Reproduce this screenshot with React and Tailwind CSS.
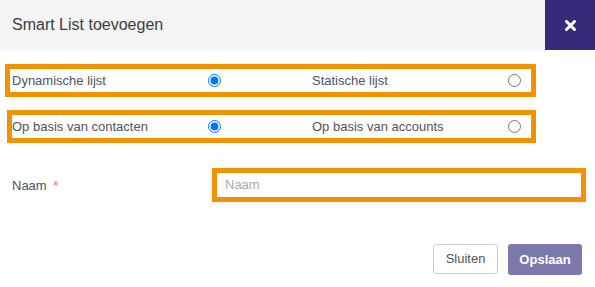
import React from "react";

const Radio = ({ checked }) => (
  <input
    type="radio"
    checked={checked}
    readOnly
    className="w-[13px] h-[13px] m-0 shrink-0"
  />
);

const ChoiceRow = ({ left, right, className }) => (
  <div
    className={`h-[33px] border-[5px] border-[#f39200] flex items-center ${className}`}
  >
    <div className="w-[209px] flex items-center justify-between">
      <span>{left}</span>
      <Radio checked />
    </div>
    <div className="ml-[89px] flex-1 flex items-center justify-between pl-[2px] pr-[10px]">
      <span>{right}</span>
      <Radio checked={false} />
    </div>
  </div>
);

export default function App() {
  return (
    <div
      className="w-[595px] h-[287px] bg-white text-[13px] text-[#4d5360] overflow-hidden"
      style={{ fontFamily: '"Liberation Sans", Arial, sans-serif' }}
    >
      <div className="h-[50px] flex bg-[#f4f4f4]">
        <div className="flex-1 flex items-center pl-[12px] text-[16px] text-[#3d3d3d]">
          Smart List toevoegen
        </div>
        <button className="w-[50px] h-[50px] bg-[#352b78] flex items-center justify-center">
          <svg width="11" height="11" viewBox="0 0 11 11">
            <path
              d="M1.5 1.5L9.5 9.5M9.5 1.5L1.5 9.5"
              stroke="white"
              strokeWidth="3"
              strokeLinecap="round"
            />
          </svg>
        </button>
      </div>

      <ChoiceRow
        className="mt-[14px] ml-[5px] w-[531px] pl-[2px]"
        left="Dynamische lijst"
        right="Statische lijst"
      />
      <ChoiceRow
        className="mt-[13px] ml-[7px] w-[529px]"
        left="Op basis van contacten"
        right="Op basis van accounts"
      />

      <div className="mt-[25px] flex items-center">
        <div className="w-[212px] pl-[12px] pt-[2px]">
          Naam <span className="text-[#e0707a] ml-[3px]">*</span>
        </div>
        <div className="w-[374px] h-[34px] border-[5px] border-[#f39200] flex items-center pl-[8px] text-[#a9a9a9]">
          Naam
        </div>
      </div>

      <div className="mt-[42px] flex justify-end gap-[10px] pr-[13px]">
        <button className="w-[65px] h-[30px] border border-[#cccccc] rounded-[3px] bg-white text-[#555]">
          Sluiten
        </button>
        <button className="w-[74px] h-[31px] rounded-[3px] bg-[#7c78ab] text-white font-bold">
          Opslaan
        </button>
      </div>
    </div>
  );
}
